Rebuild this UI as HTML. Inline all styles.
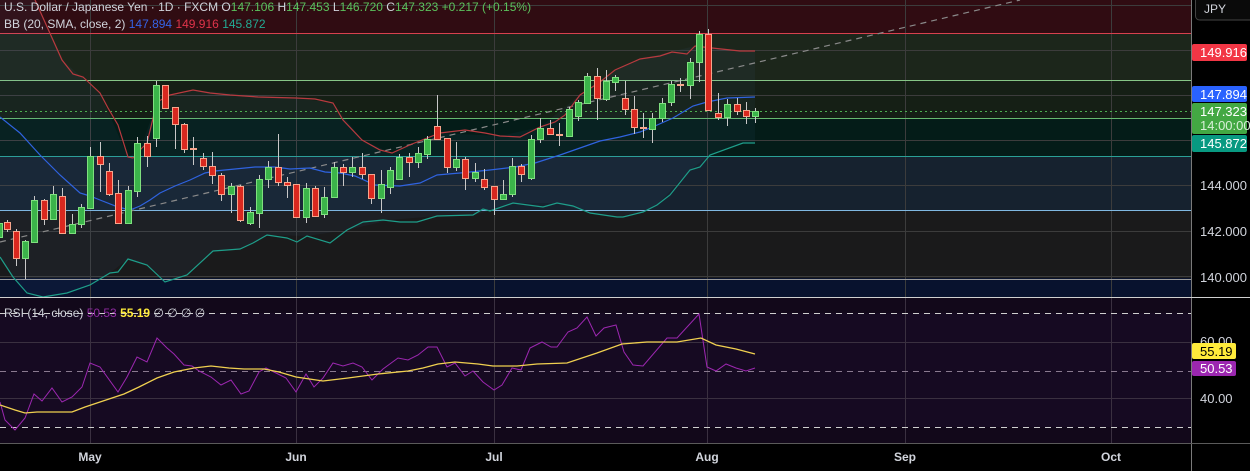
<!DOCTYPE html>
<html><head><meta charset="utf-8"><style>
html,body{margin:0;padding:0;background:#000;width:1250px;height:471px;overflow:hidden}
svg{display:block}
text{font-family:"Liberation Sans",sans-serif}
</style></head><body>
<svg width="1250" height="471" viewBox="0 0 1250 471" xmlns="http://www.w3.org/2000/svg">
<!-- main pane bands -->
<rect x="0" y="0" width="1191" height="33" fill="#300c12"/>
<rect x="0" y="33" width="1191" height="47" fill="#1c261b"/>
<rect x="0" y="80" width="1191" height="38" fill="#151f15"/>
<rect x="0" y="118" width="1191" height="38" fill="#041c18"/>
<rect x="0" y="156" width="1191" height="54" fill="#16222f"/>
<rect x="0" y="210" width="1191" height="68" fill="#1a1a1b"/>
<rect x="0" y="278" width="1191" height="19" fill="#08122e"/>
<!-- grid -->
<g stroke="#3c3c3c" stroke-width="1">
<line x1="0" y1="5.5" x2="1191" y2="5.5"/><line x1="0" y1="50.5" x2="1191" y2="50.5"/>
<line x1="0" y1="95.5" x2="1191" y2="95.5"/><line x1="0" y1="140.5" x2="1191" y2="140.5"/>
<line x1="0" y1="185.5" x2="1191" y2="185.5"/><line x1="0" y1="231.5" x2="1191" y2="231.5"/>
<line x1="0" y1="276.5" x2="1191" y2="276.5"/>
<line x1="90.5" y1="0" x2="90.5" y2="443"/><line x1="296.5" y1="0" x2="296.5" y2="443"/>
<line x1="494.5" y1="0" x2="494.5" y2="443"/><line x1="707.5" y1="0" x2="707.5" y2="443"/>
<line x1="905.5" y1="0" x2="905.5" y2="443"/><line x1="1111.5" y1="0" x2="1111.5" y2="443"/>
</g>
<!-- band lines -->
<line x1="0" y1="33.5" x2="1191" y2="33.5" stroke="#d8414e"/>
<line x1="0" y1="80.5" x2="1191" y2="80.5" stroke="#86c686"/>
<line x1="0" y1="118.5" x2="1191" y2="118.5" stroke="#66b96f"/>
<line x1="0" y1="156.5" x2="1191" y2="156.5" stroke="#2aa096"/>
<line x1="0" y1="210.5" x2="1191" y2="210.5" stroke="#80b8e2"/>
<line x1="0" y1="279.5" x2="1191" y2="279.5" stroke="#9a9a9a"/>
<!-- BB fill -->
<polygon fill="rgba(80,140,200,0.06)" points="35,0 62,60 100,93 128,157 140,150 157,102 193,90 296,98 333,103 362,140 392,153 440,133 500,136 540,127 580,95 615,70 640,59 670,52 695,46 712,48 755,51 755,143 743,143 710,155 690,170 657,205 643,212 617,217 590,213 557,203 513,203 490,211 473,215 437,216 390,220 347,230 307,236 267,235 240,249 213,251 187,275 165,282 147,265 128,259 110,273 90,285 67,293 43,297 27,293 13,277 0,257 0,0"/>
<!-- trend dashed -->
<line x1="0" y1="242" x2="1020" y2="0" stroke="#8a8a8a" stroke-width="1.2" stroke-dasharray="6,5"/>
<!-- current price dotted -->
<line x1="0" y1="111.5" x2="1191" y2="111.5" stroke="#4caf50" stroke-dasharray="2,3"/>
<!-- BB lines -->
<polyline fill="none" stroke="#b83a3f" stroke-width="1.2" points="35,0 62,60 73,74 83,77 100,93 108,108 118,125 128,157 133,158 140,150 147,143 157,102 170,95 193,90 210,93 230,95 258,97 296,98 315,99 333,103 343,120 362,140 380,150 392,153 412,144 440,133 465,130 485,133 500,136 520,137 540,127 555,122 565,115 580,95 600,82 615,70 640,59 660,56 672,52 687,54 695,46 712,48 740,51 755,51"/>
<polyline fill="none" stroke="#2f63e0" stroke-width="1.2" points="0,117 20,133 40,155 60,175 80,193 90,196 100,200 118,207 130,210 140,206 150,200 160,193 175,186 190,180 205,173 215,171 235,169 255,167 275,167 290,169 310,168 325,172 340,173 355,176 375,185 400,186 420,183 437,175 460,173 490,170 515,167 535,163 560,155 580,148 600,141 620,137 640,132 655,126 673,118 693,106 707,102 727,98 755,97"/>
<polyline fill="none" stroke="#1e9e8a" stroke-width="1.2" points="0,257 13,277 27,293 43,297 67,293 90,285 110,273 118,272 128,259 147,265 165,282 187,275 213,251 227,250 240,249 253,243 267,235 287,238 297,242 307,236 330,243 347,230 363,222 383,220 400,222 417,222 437,216 473,215 483,209 490,211 513,203 543,207 557,203 573,206 590,213 617,217 623,217 643,212 657,205 670,195 690,170 700,167 710,155 743,143 755,143"/>
<!-- wicks -->
<path stroke="#c8c8c8" stroke-width="1" fill="none" d="M7.5 220V232M16.5 229V266M25.5 240V279M34.5 196V243M44.5 199V225M53.5 186V219M62.5 188V233M72.5 214V233M81.5 204V228M90.5 147V208M100.5 142V192M109.5 163V196M118.5 180V223M128.5 186V223M137.5 137V197M147.5 136V167M156.5 81V147M165.5 85V109M175.5 107V149M184.5 123V153M193.5 137V165M203.5 153V170M212.5 152V184M221.5 173V201M231.5 183V213M240.5 185V222M250.5 207V225M259.5 175V228M268.5 161V188M278.5 134V186M287.5 177V198M296.5 184V218M306.5 183V223M315.5 186V217M324.5 187V218M334.5 162V197M343.5 164V186M352.5 157V177M362.5 153V179M371.5 174V204M381.5 170V213M390.5 167V194M399.5 154V179M409.5 153V177M418.5 147V168M427.5 136V159M437.5 95V139M447.5 138V173M456.5 142V171M465.5 157V190M475.5 163V182M484.5 169V190M494.5 186V215M503.5 180V200M512.5 158V197M521.5 164V182M531.5 135V180M540.5 118V143M550.5 120V135M559.5 123V146M569.5 107V137M578.5 100V121M587.5 73V104M597.5 68V120M606.5 70V101M615.5 75V91M625.5 81V115M634.5 96V134M643.5 113V138M652.5 113V143M662.5 98V122M671.5 81V106M680.5 78V92M690.5 58V99M699.5 31V82M708.5 29V110M718.5 93V120M727.5 99V126M737.5 98V115M746.5 102V124M755.5 108V123"/>
<!-- green bodies -->
<g fill="#3bb44a" stroke="#7fe07f" stroke-width="1">
<rect x="-3.5" y="223.5" width="6" height="14"/>
<rect x="22.5" y="241.5" width="6" height="17"/><rect x="31.5" y="200.5" width="6" height="42"/>
<rect x="50.5" y="194.5" width="6" height="25"/><rect x="69.5" y="224.5" width="6" height="9"/>
<rect x="78.5" y="207.5" width="6" height="17"/><rect x="87.5" y="156.5" width="6" height="52"/>
<rect x="125.5" y="190.5" width="6" height="33"/><rect x="134.5" y="143.5" width="6" height="48"/>
<rect x="153.5" y="85.5" width="6" height="53"/><rect x="228.5" y="186.5" width="6" height="8"/>
<rect x="247.5" y="212.5" width="6" height="11"/><rect x="256.5" y="179.5" width="6" height="34"/>
<rect x="265.5" y="167.5" width="6" height="12"/><rect x="303.5" y="188.5" width="6" height="29"/>
<rect x="321.5" y="197.5" width="6" height="17"/><rect x="331.5" y="167.5" width="6" height="30"/>
<rect x="349.5" y="167.5" width="6" height="5"/><rect x="378.5" y="184.5" width="6" height="14"/>
<rect x="387.5" y="170.5" width="6" height="17"/><rect x="396.5" y="157.5" width="6" height="22"/>
<rect x="415.5" y="153.5" width="6" height="9"/><rect x="424.5" y="139.5" width="6" height="15"/>
<rect x="453.5" y="159.5" width="6" height="8"/><rect x="472.5" y="172.5" width="6" height="6"/>
<rect x="500.5" y="194.5" width="6" height="5"/><rect x="509.5" y="166.5" width="6" height="28"/>
<rect x="528.5" y="139.5" width="6" height="39"/><rect x="537.5" y="128.5" width="6" height="11"/>
<rect x="566.5" y="109.5" width="6" height="27"/><rect x="575.5" y="102.5" width="6" height="14"/>
<rect x="584.5" y="76.5" width="6" height="27"/><rect x="603.5" y="81.5" width="6" height="18"/>
<rect x="612.5" y="77.5" width="6" height="5"/><rect x="649.5" y="118.5" width="6" height="11"/>
<rect x="659.5" y="103.5" width="6" height="15"/><rect x="668.5" y="84.5" width="6" height="18"/>
<rect x="687.5" y="62.5" width="6" height="23"/><rect x="696.5" y="34.5" width="6" height="28"/>
<rect x="724.5" y="104.5" width="6" height="13"/><rect x="752.5" y="111.5" width="6" height="5"/>
</g>
<!-- red bodies -->
<g fill="#d9281f" stroke="#f7a58c" stroke-width="1">
<rect x="4.5" y="222.5" width="6" height="7"/><rect x="13.5" y="231.5" width="6" height="27"/>
<rect x="41.5" y="200.5" width="6" height="19"/><rect x="59.5" y="196.5" width="6" height="37"/>
<rect x="97.5" y="156.5" width="6" height="8"/><rect x="106.5" y="171.5" width="6" height="23"/>
<rect x="115.5" y="193.5" width="6" height="30"/><rect x="144.5" y="143.5" width="6" height="13"/>
<rect x="162.5" y="85.5" width="6" height="23"/><rect x="172.5" y="107.5" width="6" height="17"/>
<rect x="181.5" y="124.5" width="6" height="25"/><rect x="200.5" y="158.5" width="6" height="8"/>
<rect x="209.5" y="166.5" width="6" height="9"/><rect x="218.5" y="175.5" width="6" height="19"/>
<rect x="237.5" y="186.5" width="6" height="34"/><rect x="275.5" y="167.5" width="6" height="15"/>
<rect x="284.5" y="182.5" width="6" height="3"/><rect x="293.5" y="184.5" width="6" height="33"/>
<rect x="312.5" y="188.5" width="6" height="28"/><rect x="340.5" y="167.5" width="6" height="5"/>
<rect x="359.5" y="167.5" width="6" height="7"/><rect x="368.5" y="174.5" width="6" height="24"/>
<rect x="406.5" y="157.5" width="6" height="5"/><rect x="434.5" y="126.5" width="6" height="13"/>
<rect x="444.5" y="138.5" width="6" height="29"/><rect x="462.5" y="159.5" width="6" height="19"/>
<rect x="481.5" y="179.5" width="6" height="8"/><rect x="491.5" y="186.5" width="6" height="13"/>
<rect x="518.5" y="166.5" width="6" height="8"/><rect x="547.5" y="128.5" width="6" height="6"/>
<rect x="594.5" y="76.5" width="6" height="22"/><rect x="622.5" y="98.5" width="6" height="11"/>
<rect x="631.5" y="109.5" width="6" height="18"/><rect x="705.5" y="34.5" width="6" height="76"/>
<rect x="715.5" y="113.5" width="6" height="4"/><rect x="734.5" y="104.5" width="6" height="7"/>
<rect x="743.5" y="110.5" width="6" height="6"/>
</g>
<g fill="#f7a58c">
<rect x="190" y="148" width="7" height="2"/><rect x="556" y="134" width="7" height="2"/>
<rect x="640" y="127" width="7" height="2"/><rect x="677" y="84" width="7" height="2"/>
</g>
<!-- pane separator -->
<line x1="0" y1="297.5" x2="1250" y2="297.5" stroke="#d0d0d0"/>
<!-- RSI pane -->
<rect x="0" y="298" width="1191" height="145" fill="#12081a"/>
<rect x="0" y="313" width="1191" height="114" fill="#160a22"/>
<g stroke="#3a3040"><line x1="0" y1="342.5" x2="1191" y2="342.5"/><line x1="0" y1="398.5" x2="1191" y2="398.5"/>
<line x1="90.5" y1="298" x2="90.5" y2="443"/><line x1="296.5" y1="298" x2="296.5" y2="443"/>
<line x1="494.5" y1="298" x2="494.5" y2="443"/><line x1="707.5" y1="298" x2="707.5" y2="443"/>
<line x1="905.5" y1="298" x2="905.5" y2="443"/><line x1="1111.5" y1="298" x2="1111.5" y2="443"/></g>
<g stroke="#cfcfcf" stroke-dasharray="6,5"><line x1="0" y1="313.5" x2="1191" y2="313.5"/><line x1="0" y1="427.5" x2="1191" y2="427.5"/></g>
<line x1="0" y1="371.5" x2="1191" y2="371.5" stroke="#8a7a90" stroke-dasharray="6,5"/>
<polyline fill="none" stroke="#9c27b0" stroke-width="1" points="0,402 5,420 15,430 25,418 34,394 42,401 52,388 62,402 72,397 82,387 90,363 100,367 118,392 127,377 137,357 147,362 157,338 167,348 174,354 184,365 192,366 199,371 211,377 221,385 231,380 241,394 249,391 259,372 266,368 274,372 286,378 296,392 306,374 314,387 323,378 333,363 343,366 353,363 362,367 372,380 383,369 398,358 408,360 418,355 428,347 437,347 447,367 455,363 465,376 473,371 483,382 494,390 502,385 512,368 521,370 530,348 542,342 551,347 557,347 568,332 577,328 587,317 596,336 604,328 616,325 624,352 633,365 643,366 667,338 677,338 699,314 707,367 716,371 726,364 736,368 746,371 755,368"/>
<polyline fill="none" stroke="#f0d050" stroke-width="1.3" points="0,405 15,410 25,413 37,412 50,412 72,412 85,407 100,402 124,394 139,387 157,378 174,372 194,368 211,366 229,368 244,369 264,369 279,372 296,377 323,381 348,378 378,374 408,371 423,368 438,364 455,362 478,364 493,366 517,366 537,364 567,363 597,353 622,344 647,342 677,342 701,338 716,345 736,349 755,354"/>
<!-- time axis -->
<rect x="0" y="443" width="1250" height="28" fill="#000"/>
<line x1="0" y1="443.5" x2="1191" y2="443.5" stroke="#5a5a5a"/>
<g fill="#d1d4dc" font-size="12" font-weight="bold" text-anchor="middle">
<text x="90" y="461">May</text><text x="296" y="461">Jun</text><text x="494" y="461">Jul</text>
<text x="707" y="461">Aug</text><text x="905" y="461">Sep</text><text x="1111" y="461">Oct</text></g>
<!-- right axis -->
<rect x="1191" y="0" width="59" height="471" fill="#000"/>
<line x1="1191.5" y1="0" x2="1191.5" y2="471" stroke="#7a7a7a"/>
<line x1="1191" y1="297.5" x2="1250" y2="297.5" stroke="#d0d0d0"/>
<line x1="1191" y1="443.5" x2="1250" y2="443.5" stroke="#5a5a5a"/>
<rect x="1195.5" y="-4" width="60" height="24" rx="4" fill="#0a0a0a" stroke="#444"/>
<text x="1204" y="13" fill="#d1d4dc" font-size="12">JPY</text>
<g font-size="13">
<rect x="1192" y="44" width="55" height="17" rx="2" fill="#f23645"/><text x="1200" y="57" fill="#fff">149.916</text>
<rect x="1192" y="86" width="55" height="16" rx="2" fill="#2962ff"/><text x="1200" y="99" fill="#fff">147.894</text>
<rect x="1192" y="103" width="55" height="31" rx="2" fill="#43a843"/><text x="1200" y="116" fill="#fff">147.323</text><text x="1200" y="130" fill="#d8f0d8">14:00:00</text>
<rect x="1192" y="135" width="55" height="17" rx="2" fill="#089981"/><text x="1200" y="148" fill="#fff">145.872</text>
<text x="1200" y="190" fill="#d1d4dc">144.000</text>
<text x="1200" y="236" fill="#d1d4dc">142.000</text>
<text x="1200" y="282" fill="#d1d4dc">140.000</text>
<text x="1200" y="346" fill="#d1d4dc">60.00</text>
<rect x="1192" y="343" width="44" height="16" rx="2" fill="#ffeb3b"/><text x="1200" y="356" fill="#000">55.19</text>
<rect x="1192" y="361" width="44" height="15" rx="2" fill="#9c27b0"/><text x="1200" y="373" fill="#fff">50.53</text>
<text x="1200" y="403" fill="#d1d4dc">40.00</text>
</g>
<!-- legends -->
<g font-size="12">
<text x="4" y="11" fill="#d1d4dc">U.S. Dollar / Japanese Yen · 1D · FXCM  O<tspan fill="#5cc25c">147.106</tspan> H<tspan fill="#5cc25c">147.453</tspan> L<tspan fill="#5cc25c">146.720</tspan> C<tspan fill="#5cc25c">147.323 +0.217 (+0.15%)</tspan></text>
<text x="4" y="28" fill="#d1d4dc">BB (20, SMA, close, 2)  <tspan fill="#3563e6">147.894</tspan>  <tspan fill="#e0344a">149.916</tspan>  <tspan fill="#22ab94">145.872</tspan></text>
<text x="4" y="317" fill="#d1d4dc">RSI (14, close)  <tspan fill="#8e2aa0">50.53</tspan>  <tspan fill="#ffeb3b" font-weight="bold">55.19</tspan>  ∅ ∅ ∅ ∅</text>
</g>
</svg>
</body></html>
